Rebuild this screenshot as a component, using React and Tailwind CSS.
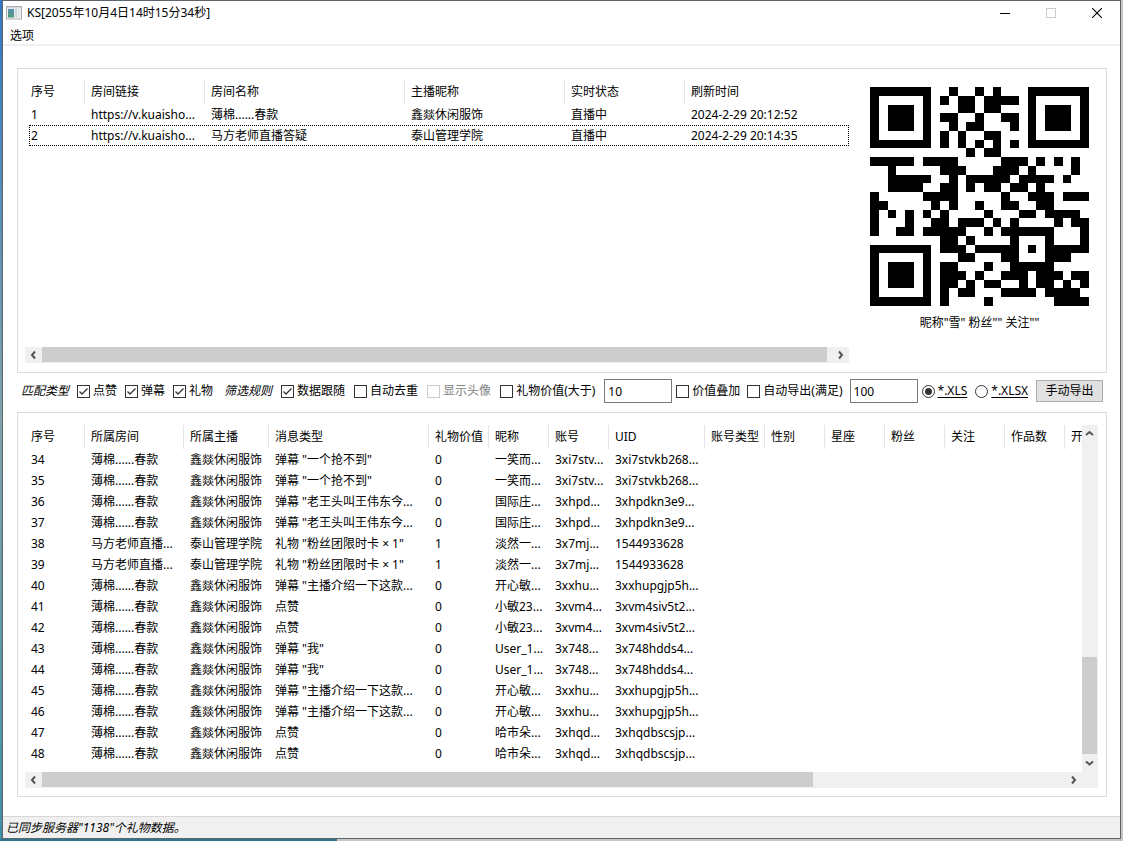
import React from "react";
import clsx from "clsx";

const rooms = [
  ["1", "https://v.kuaisho...", "薄棉......春款", "鑫燚休闲服饰", "直播中", "2024-2-29 20:12:52"],
  ["2", "https://v.kuaisho...", "马方老师直播答疑", "泰山管理学院", "直播中", "2024-2-29 20:14:35"],
];

const roomColumns = [
  { label: "序号", width: "w-14" },
  { label: "房间链接", width: "w-[120px]" },
  { label: "房间名称", width: "w-[200px]" },
  { label: "主播昵称", width: "w-[160px]" },
  { label: "实时状态", width: "w-[120px]" },
  { label: "刷新时间", width: "" },
];

const messageColumns = [
  { label: "序号", width: "w-14" },
  { label: "所属房间", width: "w-[99px]" },
  { label: "所属主播", width: "w-[85px]" },
  { label: "消息类型", width: "w-[160px]" },
  { label: "礼物价值", width: "w-[60px]" },
  { label: "昵称", width: "w-[60px]" },
  { label: "账号", width: "w-[60px]" },
  { label: "UID", width: "w-[96px]" },
  { label: "账号类型", width: "w-[60px]" },
  { label: "性别", width: "w-[60px]" },
  { label: "星座", width: "w-[60px]" },
  { label: "粉丝", width: "w-[60px]" },
  { label: "关注", width: "w-[60px]" },
  { label: "作品数", width: "w-[60px]" },
  { label: "开", width: "" },
];

const shop = ["薄棉......春款", "鑫燚休闲服饰"];
const school = ["马方老师直播...", "泰山管理学院"];

const messages = [
  ["34", ...shop, '弹幕 "一个抢不到"', "0", "一笑而...", "3xi7stv...", "3xi7stvkb268..."],
  ["35", ...shop, '弹幕 "一个抢不到"', "0", "一笑而...", "3xi7stv...", "3xi7stvkb268..."],
  ["36", ...shop, '弹幕 "老王头叫王伟东今...', "0", "国际庄...", "3xhpd...", "3xhpdkn3e9..."],
  ["37", ...shop, '弹幕 "老王头叫王伟东今...', "0", "国际庄...", "3xhpd...", "3xhpdkn3e9..."],
  ["38", ...school, '礼物 "粉丝团限时卡 × 1"', "1", "淡然一...", "3x7mj...", "1544933628"],
  ["39", ...school, '礼物 "粉丝团限时卡 × 1"', "1", "淡然一...", "3x7mj...", "1544933628"],
  ["40", ...shop, '弹幕 "主播介绍一下这款...', "0", "开心敏...", "3xxhu...", "3xxhupgjp5h..."],
  ["41", ...shop, "点赞", "0", "小敏23...", "3xvm4...", "3xvm4siv5t2..."],
  ["42", ...shop, "点赞", "0", "小敏23...", "3xvm4...", "3xvm4siv5t2..."],
  ["43", ...shop, '弹幕 "我"', "0", "User_1...", "3x748...", "3x748hdds4..."],
  ["44", ...shop, '弹幕 "我"', "0", "User_1...", "3x748...", "3x748hdds4..."],
  ["45", ...shop, '弹幕 "主播介绍一下这款...', "0", "开心敏...", "3xxhu...", "3xxhupgjp5h..."],
  ["46", ...shop, '弹幕 "主播介绍一下这款...', "0", "开心敏...", "3xxhu...", "3xxhupgjp5h..."],
  ["47", ...shop, "点赞", "0", "哈市朵...", "3xhqd...", "3xhqdbscsjp..."],
  ["48", ...shop, "点赞", "0", "哈市朵...", "3xhqd...", "3xhqdbscsjp..."],
];

const qrRows = [
  "#######..#..#.#...#######",
  "#.....#.#.##.####.#.....#",
  "#.###.#...##.##...#.###.#",
  "#.###.#.##..#..##.#.###.#",
  "#.###.#..#.##...#.#.###.#",
  "#.....#.#.#..##...#.....#",
  "#######.#.#.#.#.#.#######",
  "...........#.##..........",
  "#####.####.....###.#.#.#.",
  "..#.....###...###.#....#.",
  "..#####..#.#####.####.#..",
  "..####..##.#.##.##.#.....",
  "#.....####.....#..###.###",
  "##.....#.#..#..##..##....",
  "#.#.#.#.#....#...##.####.",
  "#...#..##.###.#.#....#.##",
  "#..##.#####..#.######...#",
  "........##.#....#...#...#",
  "#######.###.#####.#.#####",
  "#.....#...##...##...###..",
  "#.###.#.##...#..#####....",
  "#.###.#.###.#..###.###.##",
  "#.###.#.##.#.##..#.##.#.#",
  "#.....#.#.##...####.####.",
  "#######.#....#.......####",
];

const QrCode = () => (
  <svg viewBox="0 0 25 25" className="w-[219px] h-[219px]" shapeRendering="crispEdges" role="img" aria-label="二维码">
    {qrRows.map((row, y) =>
      [...row].map((cell, x) =>
        cell === "#" ? <rect key={`${x}-${y}`} x={x} y={y} width="1" height="1" /> : null
      )
    )}
  </svg>
);

const arrows = {
  left: "M9 4.5 L6 8 L9 11.5",
  right: "M6 4.5 L9 8 L6 11.5",
  up: "M4 10 L7.5 7 L11 10",
  down: "M4 5.5 L7.5 8.5 L11 5.5",
};

const ArrowButton = ({ dir, label }) => (
  <button aria-label={label} className="w-4 h-4 shrink-0">
    <svg viewBox="0 0 16 16" className="w-4 h-4" fill="none" stroke="#555" strokeWidth="2">
      <path d={arrows[dir]} />
    </svg>
  </button>
);

const HScrollbar = ({ thumb }) => (
  <div className="flex h-4 bg-[#f0f0f0] pl-px">
    <ArrowButton dir="left" label="向左滚动" />
    <div className="flex-1">
      <div className="h-[15px] bg-[#cdcdcd]" style={{ width: thumb }}></div>
    </div>
    <ArrowButton dir="right" label="向右滚动" />
  </div>
);

const DataTable = ({ columns, rows, focused, className }) => (
  <table className={clsx("table-fixed border-collapse", className)}>
    <thead>
      <tr className="h-6">
        {columns.map((col, i) => (
          <th key={col.label} className={clsx("p-0 font-normal text-left", col.width)}>
            <div
              className={clsx(
                "h-6 leading-6 whitespace-nowrap overflow-hidden",
                i === 0 ? "pl-0.5" : "pl-1.5",
                i < columns.length - 1 && "border-r border-[#e5e5e5]"
              )}
            >
              {col.label}
            </div>
          </th>
        ))}
      </tr>
    </thead>
    <tbody>
      {rows.map((row) => (
        <tr
          key={row[0]}
          className={clsx("h-[21px]", row[0] === focused && "outline outline-dotted outline-black -outline-offset-1")}
        >
          {columns.map((col, i) => (
            <td
              key={col.label}
              className={clsx("py-0 pr-0 leading-[21px] whitespace-nowrap", i === 0 ? "pl-0.5" : "pl-1.5")}
            >
              {row[i]}
            </td>
          ))}
        </tr>
      ))}
    </tbody>
  </table>
);

const Check = ({ label, checked, disabled }) => (
  <label className={clsx("flex items-center gap-[3px] whitespace-nowrap", disabled && "text-[#838383]")}>
    <span className="grid w-[13px] h-[13px]">
      <input
        type="checkbox"
        defaultChecked={checked}
        disabled={disabled}
        className="peer col-start-1 row-start-1 appearance-none w-[13px] h-[13px] bg-white border border-[#333] disabled:border-[#ccc]"
      />
      <svg
        viewBox="0 0 13 13"
        className="col-start-1 row-start-1 w-[13px] h-[13px] pointer-events-none invisible peer-checked:visible"
        fill="none"
        stroke="#333"
        strokeWidth="1.3"
      >
        <path d="M2.5 6.5 L5 9 L10.5 3.5" />
      </svg>
    </span>
    {label}
  </label>
);

const Radio = ({ label, checked }) => (
  <label className="flex items-center gap-[3px] whitespace-nowrap">
    <span className="grid w-[13px] h-[13px] place-items-center">
      <input
        type="radio"
        name="format"
        defaultChecked={checked}
        className="peer col-start-1 row-start-1 appearance-none w-[13px] h-[13px] rounded-full bg-white border border-[#333]"
      />
      <span className="col-start-1 row-start-1 w-[7px] h-[7px] rounded-full bg-[#333] pointer-events-none invisible peer-checked:visible"></span>
    </span>
    <span className="underline underline-offset-2">{label}</span>
  </label>
);

const NumberBox = ({ value, label }) => (
  <input
    type="text"
    aria-label={label}
    defaultValue={value}
    className="w-[68px] h-6 px-[3px] bg-white border border-[#7a7a7a]"
  />
);

const TitleBar = () => (
  <header className="flex items-center h-[25px] pl-[3px] pb-0.5">
    <svg viewBox="0 0 16 14" className="w-4 h-3.5 mr-[5px]">
      <defs>
        <linearGradient id="pane" x1="0" y1="0" x2="0" y2="1">
          <stop offset="0" stopColor="#5b8fb8" />
          <stop offset="1" stopColor="#4f9a70" />
        </linearGradient>
      </defs>
      <rect x="0.5" y="0.5" width="15" height="12.5" fill="#f4f4f4" stroke="#a9adb0" />
      <rect x="1" y="1" width="14" height="1.5" fill="#d6dade" />
      <rect x="2" y="3" width="6" height="8.5" fill="url(#pane)" />
      <rect x="9" y="3" width="2" height="8.5" fill="#c5d3dc" />
      <rect x="12" y="3" width="2" height="8.5" fill="#e2e4e6" />
    </svg>
    <h1 className="flex-1">KS[2055年10月4日14时15分34秒]</h1>
    <div className="flex h-full">
      <button aria-label="最小化" className="w-[46px] grid place-items-center">
        <svg viewBox="0 0 10 10" className="w-2.5 h-2.5" stroke="#000">
          <path d="M0 5.5 H10" />
        </svg>
      </button>
      <button aria-label="最大化" disabled className="w-[46px] grid place-items-center">
        <svg viewBox="0 0 10 10" className="w-2.5 h-2.5" fill="none" stroke="#ccc">
          <rect x="0.5" y="0.5" width="9" height="9" />
        </svg>
      </button>
      <button aria-label="关闭" className="w-[46px] grid place-items-center">
        <svg viewBox="0 0 10 10" className="w-2.5 h-2.5" stroke="#000" strokeWidth="1.1">
          <path d="M0 0 L10 10 M10 0 L0 10" />
        </svg>
      </button>
    </div>
  </header>
);

const RoomPanel = () => (
  <section className="flex border border-[#dcdcdc] pt-[11px] pb-[9px] pl-[7px] pr-[17px] gap-[21px]">
    <div className="flex-1 min-w-0 flex flex-col">
      <div className="flex-1 pl-1">
        <DataTable columns={roomColumns} rows={rooms} focused="2" className="w-full" />
      </div>
      <HScrollbar thumb="99.2%" />
    </div>
    <div className="flex flex-col items-center pt-[7px] pb-8">
      <QrCode />
      <p className="mt-2 leading-[17px] whitespace-pre">昵称"雪" 粉丝"" 关注""</p>
    </div>
  </section>
);

const FilterBar = () => (
  <form className="flex items-center gap-[11px] h-[39px] pl-1 pb-[3px]">
    <div className="flex items-center gap-2">
      <span className="italic whitespace-nowrap">匹配类型</span>
      <Check label="点赞" checked />
      <Check label="弹幕" checked />
      <Check label="礼物" checked />
    </div>
    <div className="flex items-center gap-1">
      <div className="flex items-center gap-[9px]">
        <span className="italic whitespace-nowrap">筛选规则</span>
        <Check label="数据跟随" checked />
        <Check label="自动去重" />
        <Check label="显示头像" disabled />
        <Check label="礼物价值(大于)" />
        <NumberBox value="10" label="礼物价值大于" />
      </div>
      <div className="flex items-center gap-[7px]">
        <Check label="价值叠加" />
        <Check label="自动导出(满足)" />
        <NumberBox value="100" label="自动导出满足" />
      </div>
      <div className="flex items-center gap-2">
        <Radio label="*.XLS" checked />
        <Radio label="*.XLSX" />
        <button type="button" className="w-[67px] h-[22px] bg-[#e1e1e1] border border-[#adadad] whitespace-nowrap">
          手动导出
        </button>
      </div>
    </div>
  </form>
);

const MessagePanel = () => (
  <section className="flex-1 flex flex-col border border-[#dcdcdc] pt-3 pb-2 pl-[7px] pr-2">
    <div className="flex-1 flex">
      <div className="flex-1 min-w-0 overflow-hidden pl-1 pb-2">
        <DataTable columns={messageColumns} rows={messages} className="w-[1136px]" />
      </div>
      <div className="flex flex-col w-4 bg-[#f0f0f0]">
        <ArrowButton dir="up" label="向上滚动" />
        <div className="flex-1 flex flex-col justify-end pb-0.5">
          <div className="w-[15px] h-[31%] bg-[#cdcdcd]"></div>
        </div>
        <ArrowButton dir="down" label="向下滚动" />
      </div>
    </div>
    <div className="bg-[#f0f0f0] pr-4">
      <HScrollbar thumb="75.3%" />
    </div>
  </section>
);

export default function App() {
  return (
    <div className="flex flex-col min-h-screen bg-[#c8c8c8] text-xs text-black font-['Noto_Sans','Noto_Sans_CJK_SC',sans-serif]">
      <div className="flex-1 flex">
        <div className="w-0.5 bg-linear-to-b from-[#2f78c4] via-[#7fa3a8] to-[#3c8fa6]"></div>
        <main className="flex-1 min-w-0 flex flex-col bg-white border border-[#5f6468]">
          <TitleBar />
          <nav className="flex items-center h-5 pl-[7px] pt-0.5 border-b-2 border-[#f0f0f0]">
            <button>选项</button>
          </nav>
          <div className="flex-1 flex flex-col pt-[22px] pb-[19px] pl-3.5 pr-[13px]">
            <RoomPanel />
            <FilterBar />
            <MessagePanel />
          </div>
          <footer className="flex items-center h-[22px] pl-[3px] bg-[#f0f0f0] border-t border-[#d7d7d7] italic">
            已同步服务器"1138"个礼物数据。
          </footer>
        </main>
        <div className="w-0.5 bg-[#c4c4c4]"></div>
      </div>
      <div className="flex h-0.5">
        <div className="w-[30%] bg-[#2b7890]"></div>
        <div className="flex-1 bg-[#c4c6c8]"></div>
      </div>
    </div>
  );
}
